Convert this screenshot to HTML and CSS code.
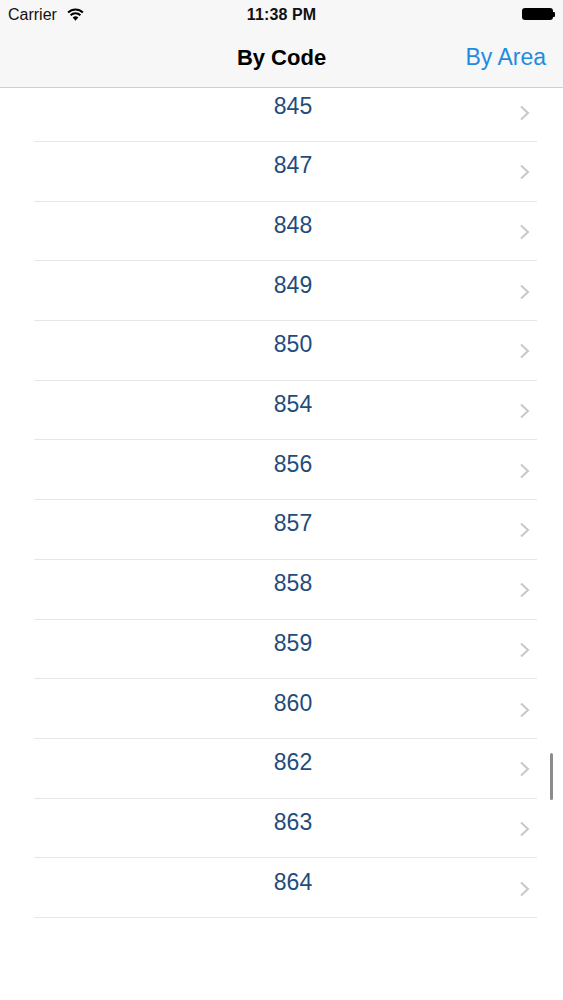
FILE: index.html
```html
<!DOCTYPE html>
<html lang="en">
<head>
  <meta charset="UTF-8">
  <meta name="viewport" content="width=device-width, initial-scale=1.0">
  <title>By Code</title>
  <link rel="stylesheet" href="styles.css">
</head>
<body>
  <header>
    <div class="status-bar">
      <div class="carrier">
        <span>Carrier</span>
        <svg class="wifi" width="17" height="13" viewBox="0 0 17 13">
          <path d="M8.5 12.8 L5.7 9.5 A4 4 0 0 1 11.3 9.5 Z" fill="#000"/>
          <path d="M3.6 7.3 A7 7 0 0 1 13.4 7.3" fill="none" stroke="#000" stroke-width="2.1"/>
          <path d="M1.1 4.5 A10.5 10.5 0 0 1 15.9 4.5" fill="none" stroke="#000" stroke-width="2.1"/>
        </svg>
      </div>
      <div class="time">11:38 PM</div>
      <div class="battery">
        <span class="battery-body"></span>
        <span class="battery-nub"></span>
      </div>
    </div>
    <nav class="nav-bar">
      <span class="nav-side"></span>
      <h1>By Code</h1>
      <a class="nav-side nav-button">By Area</a>
    </nav>
  </header>

  <ul class="code-list">
    <li><span class="code">845</span><svg class="chevron" width="11" height="16" viewBox="0 0 11 16"><path d="M2 1.5 L9 8 L2 14.5" /></svg></li>
    <li><span class="code">847</span><svg class="chevron" width="11" height="16" viewBox="0 0 11 16"><path d="M2 1.5 L9 8 L2 14.5" /></svg></li>
    <li><span class="code">848</span><svg class="chevron" width="11" height="16" viewBox="0 0 11 16"><path d="M2 1.5 L9 8 L2 14.5" /></svg></li>
    <li><span class="code">849</span><svg class="chevron" width="11" height="16" viewBox="0 0 11 16"><path d="M2 1.5 L9 8 L2 14.5" /></svg></li>
    <li><span class="code">850</span><svg class="chevron" width="11" height="16" viewBox="0 0 11 16"><path d="M2 1.5 L9 8 L2 14.5" /></svg></li>
    <li><span class="code">854</span><svg class="chevron" width="11" height="16" viewBox="0 0 11 16"><path d="M2 1.5 L9 8 L2 14.5" /></svg></li>
    <li><span class="code">856</span><svg class="chevron" width="11" height="16" viewBox="0 0 11 16"><path d="M2 1.5 L9 8 L2 14.5" /></svg></li>
    <li><span class="code">857</span><svg class="chevron" width="11" height="16" viewBox="0 0 11 16"><path d="M2 1.5 L9 8 L2 14.5" /></svg></li>
    <li><span class="code">858</span><svg class="chevron" width="11" height="16" viewBox="0 0 11 16"><path d="M2 1.5 L9 8 L2 14.5" /></svg></li>
    <li><span class="code">859</span><svg class="chevron" width="11" height="16" viewBox="0 0 11 16"><path d="M2 1.5 L9 8 L2 14.5" /></svg></li>
    <li><span class="code">860</span><svg class="chevron" width="11" height="16" viewBox="0 0 11 16"><path d="M2 1.5 L9 8 L2 14.5" /></svg></li>
    <li><span class="code">862</span><svg class="chevron" width="11" height="16" viewBox="0 0 11 16"><path d="M2 1.5 L9 8 L2 14.5" /></svg></li>
    <li><span class="code">863</span><svg class="chevron" width="11" height="16" viewBox="0 0 11 16"><path d="M2 1.5 L9 8 L2 14.5" /></svg></li>
    <li><span class="code">864</span><svg class="chevron" width="11" height="16" viewBox="0 0 11 16"><path d="M2 1.5 L9 8 L2 14.5" /></svg></li>
  </ul>

  <div class="scroll-indicator"></div>
</body>
</html>
```

FILE: styles.css
```css
body {
  font-family: "Liberation Sans", Arial, sans-serif;
  margin: 0;
  padding: 0;
  width: 563px;
  height: 1000px;
  overflow: hidden;
  background-color: #fff;
  position: relative;
}

header {
  position: relative;
  z-index: 1;
  background-color: #f7f7f7;
  border-bottom: 1px solid #cfcfcf;
}

.status-bar {
  height: 30px;
  display: flex;
  align-items: center;
  justify-content: space-between;
  padding: 0 8px 0 8px;
  font-size: 16px;
  color: #111;
}

.carrier {
  flex: 1;
  display: flex;
  align-items: center;
  gap: 10px;
}

.wifi {
  margin-top: -2px;
}

.time {
  font-weight: bold;
  letter-spacing: 0.1px;
}

.battery {
  flex: 1;
  display: flex;
  justify-content: flex-end;
  align-items: center;
}

.battery-body {
  width: 31px;
  height: 12px;
  background-color: #000;
  border-radius: 3px;
  margin-top: -2px;
}

.battery-nub {
  width: 2px;
  height: 5px;
  background-color: #000;
  border-radius: 0 1px 1px 0;
  margin-top: -2px;
}

.nav-bar {
  height: 57px;
  display: flex;
  align-items: center;
  padding: 0 17px 0 17px;
}

.nav-bar h1 {
  margin: 0;
  font-size: 22px;
  font-weight: bold;
  color: #000;
  text-align: center;
  padding-bottom: 2px;
}

.nav-side {
  flex: 1;
}

.nav-button {
  font-size: 23px;
  color: #1f8ce0;
  text-align: right;
  padding-bottom: 2px;
}

.code-list {
  list-style: none;
  margin: -5.7px 0 0 0;
  padding: 0;
}

.code-list li {
  height: 59.7px;
  box-sizing: border-box;
  margin: 0 26px 0 34px;
  border-bottom: 1px solid #e6e6e6;
  display: flex;
  align-items: center;
}

.code {
  flex: 1;
  text-align: center;
  padding-left: 33px;
  padding-bottom: 11px;
  font-size: 23px;
  color: #1f4c7c;
}

.chevron {
  margin-right: 7px;
  margin-top: 2px;
  fill: none;
  stroke: #c7c7cc;
  stroke-width: 2;
}

.scroll-indicator {
  position: absolute;
  left: 550px;
  top: 753px;
  width: 3px;
  height: 47px;
  border-radius: 2px;
  background-color: #8c8c8c;
}
```
